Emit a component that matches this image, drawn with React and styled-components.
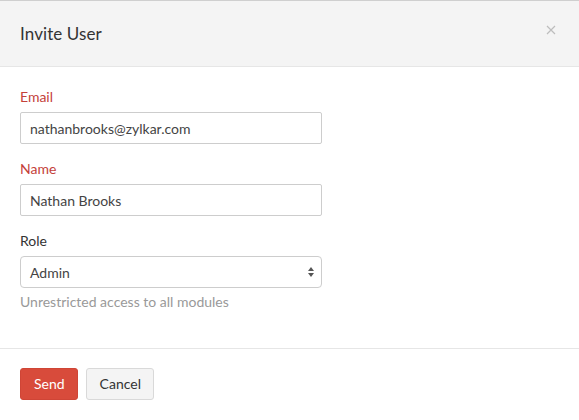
import React from "react";
import styled, { createGlobalStyle } from "styled-components";

const Global = createGlobalStyle`
  html, body { margin: 0; padding: 0; background: #fff; }
  body { font-family: "Lato", "Open Sans", sans-serif; color: #333; }
  * { box-sizing: border-box; }
`;

const Dialog = styled.div`
  width: 579px;
  height: 420px;
  border-top: 1px solid #cfcfcf;
  background: #fff;
  display: flex;
  flex-direction: column;
`;

const Header = styled.div`
  height: 66px;
  background: #f4f4f4;
  border-bottom: 1px solid #e6e6e6;
  display: flex;
  align-items: center;
  justify-content: space-between;
  padding: 0 20px 0 20px;
`;

const Title = styled.h1`
  margin: 0;
  font-size: 17px;
  font-weight: 400;
  color: #333;
  letter-spacing: 0.1px;
`;

const Close = styled.button`
  border: 0;
  background: none;
  padding: 0;
  width: 12px;
  height: 12px;
  margin: 0 2px 8px 0;
  display: flex;
  align-items: center;
  justify-content: center;
  cursor: pointer;
`;

const Body = styled.div`
  padding: 21px 20px 0 20px;
  height: 282px;
  border-bottom: 1px solid #e6e6e6;
`;

const Field = styled.div`
  width: 302px;
  display: flex;
  flex-direction: column;
  margin-bottom: 16px;
`;

const Label = styled.label`
  font-size: 14px;
  line-height: 18px;
  height: 18px;
  margin-bottom: 6px;
  color: ${(p) => (p.$required ? "#c4413a" : "#333")};
`;

const Input = styled.div`
  height: 32px;
  border: 1px solid #cdcdcd;
  border-radius: 2px;
  padding: 0 9px;
  display: flex;
  align-items: center;
  font-size: 14px;
  color: #444;
`;

const Select = styled(Input)`
  border-radius: 4px;
  justify-content: space-between;
  padding-right: 6px;
`;

const Help = styled.div`
  margin-top: 6px;
  font-size: 14px;
  line-height: 16px;
  color: #999;
`;

const Footer = styled.div`
  padding: 19px 20px;
  display: flex;
  gap: 8px;
`;

const Button = styled.button`
  height: 32px;
  padding: 0 12px 1px 13px;
  font-family: inherit;
  font-size: 14px;
  border-radius: 3px;
  border: 1px solid ${(p) => (p.$primary ? "#cf4536" : "#d9d9d9")};
  background: ${(p) => (p.$primary ? "#d84b3b" : "#f4f4f4")};
  color: ${(p) => (p.$primary ? "#fff" : "#333")};
  cursor: pointer;
`;

export default function App() {
  return (
    <>
      <Global />
      <Dialog>
        <Header>
          <Title>Invite User</Title>
          <Close aria-label="close">
            <svg width="10" height="10" viewBox="0 0 10 10">
              <path d="M1 1L9 9M9 1L1 9" stroke="#bdbdbd" strokeWidth="1.2" />
            </svg>
          </Close>
        </Header>
        <Body>
          <Field>
            <Label $required>Email</Label>
            <Input>nathanbrooks@zylkar.com</Input>
          </Field>
          <Field>
            <Label $required>Name</Label>
            <Input>Nathan Brooks</Input>
          </Field>
          <Field>
            <Label>Role</Label>
            <Select>
              Admin
              <svg width="8" height="12" viewBox="0 0 8 12">
                <path d="M4 1L7 5H1Z" fill="#555" />
                <path d="M4 11L7 7H1Z" fill="#555" />
              </svg>
            </Select>
            <Help>Unrestricted access to all modules</Help>
          </Field>
        </Body>
        <Footer>
          <Button $primary>Send</Button>
          <Button>Cancel</Button>
        </Footer>
      </Dialog>
    </>
  );
}
